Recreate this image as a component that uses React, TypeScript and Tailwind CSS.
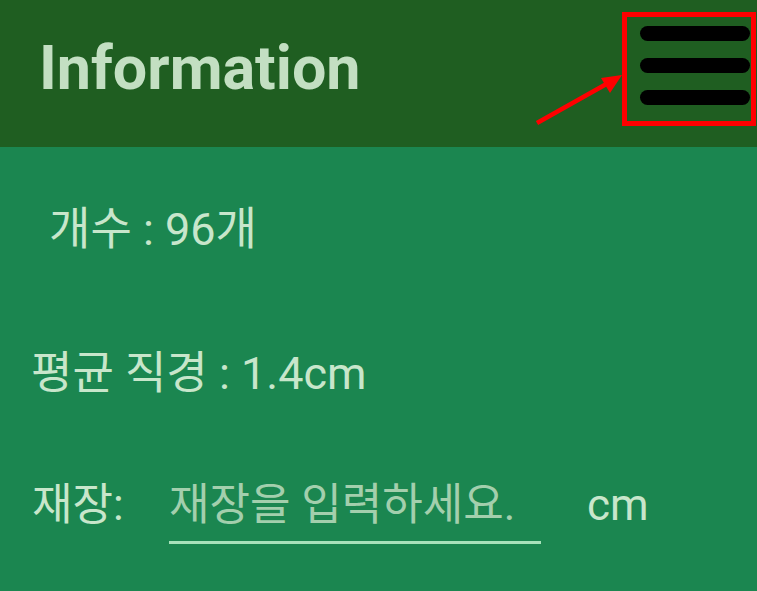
import React from "react";

export default function App() {
  const font = { fontFamily: 'Roboto, "Noto Sans CJK KR", sans-serif' };
  return (
    <div className="w-[757px] h-[591px] overflow-hidden bg-[#1b8650] relative" style={font}>
      <header className="h-[147px] bg-[#1f5e21] flex items-center justify-between pl-[39px] pr-[10px] relative">
        <h1 className="text-[61px] leading-none font-bold text-[#c3dfc2] tracking-[0px] -mt-[10px]">Information</h1>
        <div className="w-[112px] h-[112px] flex flex-col justify-center gap-[17px] pl-[5px] -mt-[16px]">
          <span className="block w-[110px] h-[15px] rounded-full bg-black" />
          <span className="block w-[110px] h-[15px] rounded-full bg-black" />
          <span className="block w-[110px] h-[15px] rounded-full bg-black" />
        </div>
        <div className="absolute left-[622px] top-[12px] w-[134px] h-[114px] border-[5px] border-[#ff0000]" />
        <svg className="absolute left-[530px] top-[66px]" width="96" height="64" viewBox="0 0 96 64">
          <line x1="7" y1="57" x2="80" y2="16" stroke="#ff0000" strokeWidth="4.5" />
          <polygon points="92,9 71,12 80,27" fill="#ff0000" />
        </svg>
      </header>
      <main className="flex flex-col text-[#c8e6cb]">
        <p className="pl-[49px] pt-[60px] text-[45px] leading-none">개수 : 96개</p>
        <p className="pl-[31px] pt-[99px] text-[45px] leading-none">평균 직경 : 1.4cm</p>
        <div className="flex items-start pt-[87px] pl-[32px]">
          <span className="text-[44px] leading-none w-[137px]">재장:</span>
          <div className="w-[372px] border-b-[3px] border-[#a8e2bb] pb-[14px]">
            <span className="text-[44px] leading-none text-[#a3cfad]">재장을 입력하세요.</span>
          </div>
          <span className="text-[44px] leading-none ml-[46px]">cm</span>
        </div>
      </main>
    </div>
  );
}
